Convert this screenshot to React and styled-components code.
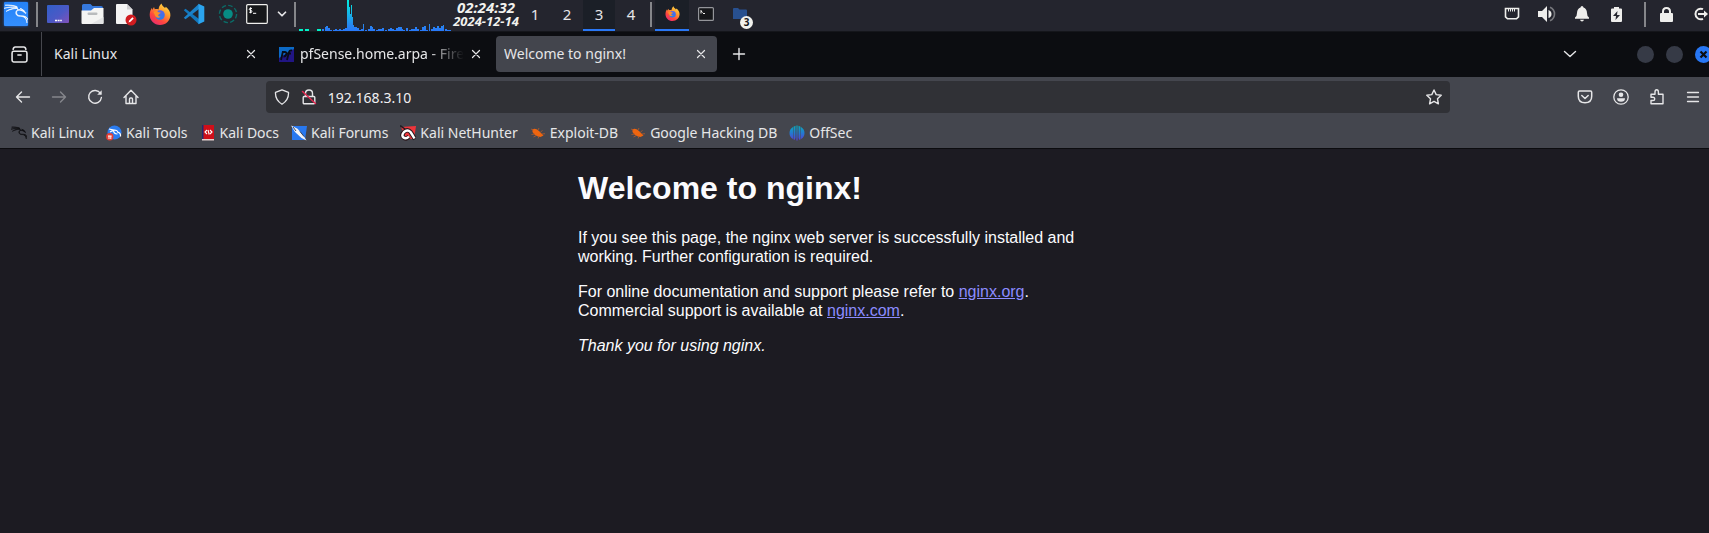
import React from 'react';
import styled, { createGlobalStyle, css } from 'styled-components';
import { SiKalilinux } from 'react-icons/si';

const GlobalStyle = createGlobalStyle`
  * { box-sizing: border-box; }
  html, body { margin: 0; background: #1c1b22; }
  body { font-family: "Noto Sans", "Open Sans", sans-serif; color: #e6e6e8; overflow-x: hidden; }
  button { font: inherit; color: inherit; background: none; border: 0; padding: 0; margin: 0; }
  svg { display: block; flex: none; }
`;

const Desktop = styled.div`
  display: flex;
  flex-direction: column;
  min-height: 100vh;
  overflow-x: clip;
`;

/* ---------- desktop panel ---------- */

const Panel = styled.header`
  display: flex;
  align-items: stretch;
  height: 32px;
  background: #24252e;
  border-bottom: 1px solid #15161b;
`;

const Launchers = styled.nav`
  display: flex;
  align-items: center;
  height: 28px;
`;

const LauncherButton = styled.button`
  display: grid;
  place-items: center;
  width: ${(p) => p.$width || 34}px;
  height: 28px;
`;

const Divider = styled.span`
  flex: none;
  width: 2px;
  height: 25px;
  margin-top: 2px;
  margin-left: ${(p) => p.$before || 0}px;
  margin-right: ${(p) => p.$after || 0}px;
  background: #85868a;
`;

const Clock = styled.time`
  display: flex;
  flex-direction: column;
  align-items: center;
  width: 66px;
  font-weight: 700;
  font-style: italic;
  color: #f2f2ee;
`;

const ClockTime = styled.span`
  font-size: 15px;
  line-height: 14px;
`;

const ClockDate = styled.span`
  font-size: 13px;
  line-height: 14px;
`;

const Workspaces = styled.nav`
  display: flex;
  margin-right: 3px;
`;

const activeItem = css`
  background: #1b1f27;
  border-bottom: 2px solid #2a78f6;
`;

const WorkspaceButton = styled.button`
  width: 32px;
  font-size: 15px;
  line-height: 27px;
  border-bottom: 2px solid transparent;
  ${(p) => p.$active && activeItem}
`;

const TaskButton = styled.button`
  position: relative;
  display: grid;
  place-items: center;
  width: 34px;
  padding-bottom: 2px;
  border-bottom: 2px solid transparent;
  ${(p) => p.$active && activeItem}
`;

const TaskCount = styled.span`
  position: absolute;
  right: 4px;
  bottom: 0;
  width: 13px;
  height: 13px;
  border-radius: 50%;
  background: #f2f2ee;
  color: #16171b;
  font-size: 10px;
  font-weight: 700;
  line-height: 13px;
  text-align: center;
`;

const Tray = styled.div`
  display: flex;
  margin-left: auto;
`;

const TrayButton = styled.button`
  display: grid;
  place-items: center;
  width: 35px;
  height: 28px;
  color: #eeeeec;
`;

const LogoutButton = styled(TrayButton)`
  width: 25px;
  padding-left: 8px;
`;

/* ---------- browser window ---------- */

const TabBar = styled.div`
  display: flex;
  align-items: center;
  height: 45px;
  padding-bottom: 1px;
  background: #0c0d11;
  font-size: 14px;
`;

const ViewButton = styled.button`
  display: grid;
  place-items: center;
  align-self: stretch;
  width: 42px;
  padding-right: 3px;
  border-right: 1px solid #46474d;
`;

const Tabs = styled.div`
  display: flex;
  gap: 4px;
  padding: 0 4px;
`;

const Tab = styled.div`
  display: flex;
  align-items: center;
  width: 221px;
  height: 36px;
  padding-left: 8px;
  border-radius: 4px;
  background: ${(p) => (p.$active ? '#43454d' : 'transparent')};
`;

const TabLabel = styled.button`
  display: flex;
  align-items: center;
  gap: 6px;
  flex: 1;
  min-width: 0;
  overflow: hidden;
  white-space: nowrap;
  text-align: left;
  line-height: 24px;
  ${(p) => p.$fade && css`mask-image: linear-gradient(to right, #000 80%, transparent 100%);`}
`;

const TabClose = styled.button`
  display: grid;
  place-items: center;
  flex: none;
  width: 24px;
  height: 24px;
  margin-right: 4px;
`;

const BarButton = styled.button`
  display: grid;
  place-items: center;
  flex: none;
  width: 36px;
  height: 36px;
  opacity: ${(p) => (p.disabled ? 0.4 : 1)};
`;

const WindowControls = styled.div`
  display: flex;
  align-items: center;
  gap: 12px;
  margin-left: auto;
  margin-right: -3px;
`;

const TabListButton = styled(BarButton)`
  margin-right: 37px;
`;

const WindowButton = styled.button`
  display: grid;
  place-items: center;
  width: 17px;
  height: 17px;
  border-radius: 50%;
  background: ${(p) => (p.$close ? '#2777f5' : '#363a46')};
`;

const Toolbar = styled.div`
  display: flex;
  align-items: center;
  height: 40px;
  padding-left: 5px;
  background: #44464e;
`;

const ToolGroup = styled.div`
  display: flex;
  margin-right: ${(p) => (p.$end ? -2 : 0)}px;
`;

const Spring = styled.span`
  flex: 1;
`;

const AddressBar = styled.div`
  display: flex;
  align-items: center;
  gap: 11px;
  flex: 10;
  min-width: 0;
  height: 32px;
  padding: 0 8px;
  border-radius: 4px;
  background: #303136;
`;

const AddressInput = styled.input`
  flex: 1;
  min-width: 0;
  padding: 0;
  border: 0;
  outline: 0;
  background: none;
  color: #f0f0f2;
  font: 14px "Noto Sans", "Open Sans", sans-serif;
`;

const Bookmarks = styled.nav`
  display: flex;
  gap: 12px;
  height: 31px;
  padding: 0 11px;
  background: #44464e;
`;

const Bookmark = styled.a`
  display: flex;
  align-items: center;
  gap: 4px;
  height: 31px;
  color: inherit;
  font-size: 14px;
  text-decoration: none;
  white-space: nowrap;
`;

/* ---------- page ---------- */

const Page = styled.main`
  flex: 1;
  padding-left: 7px;
  border-top: 1px solid #0c0c0f;
  background: #1c1b22;
  color: #fbfbfe;
  font: 16px/19px "Liberation Sans", Arial, sans-serif;
`;

const Article = styled.article`
  width: 35em;
  margin: 0 auto;
  p { margin: 16px 0; }
  h1 { margin: 21px 0; font-size: 32px; line-height: 37px; }
  a { color: #8c8cff; }
`;

/* ---------- icons ---------- */

const Line = ({ size = 16, children, w = 1.4, ...rest }) => (
  <svg width={size} height={size} viewBox="0 0 16 16" fill="none" stroke="currentColor"
    strokeWidth={w} strokeLinecap="round" strokeLinejoin="round" aria-hidden="true" {...rest}>
    {children}
  </svg>
);

const CloseIcon = () => <Line w={1.2}><path d="M4.5 4.5l7 7m0-7l-7 7" /></Line>;

const KaliIcon = () => (
  <svg width="28" height="28" viewBox="0 0 28 28" aria-hidden="true">
    <defs>
      <linearGradient id="kaliBg" x2="0" y2="1"><stop stopColor="#2482f7" /><stop offset="1" stopColor="#348fff" /></linearGradient>
      <filter id="kaliGlow" x="-30%" y="-30%" width="160%" height="160%"><feGaussianBlur stdDeviation="1.6" /></filter>
    </defs>
    <rect x="2" y="2" width="24" height="24" rx="2" fill="#1c5fc7" filter="url(#kaliGlow)" />
    <rect x="2" y="2" width="24" height="24" rx="1" fill="url(#kaliBg)" />
    <SiKalilinux x="2" y="2" size={24} color="#fff" stroke="#fff" strokeWidth=".6" />
  </svg>
);

const ShowDesktopIcon = () => (
  <svg width="22" height="18" viewBox="0 0 22 18" aria-hidden="true">
    <defs><linearGradient id="desk" y2="1"><stop stopColor="#315fc9" /><stop offset=".55" stopColor="#4b59c6" /><stop offset="1" stopColor="#8151b9" /></linearGradient></defs>
    <rect width="22" height="18" rx="1" fill="url(#desk)" />
    <path d="M8 15.5h2m.6 0h2m.6 0h1.6" stroke="#fff" strokeWidth="1.4" />
  </svg>
);

const FilesIcon = () => (
  <svg width="23" height="22" viewBox="0 0 23 22" aria-hidden="true">
    <path d="M1 2.500q0-1.500 1.500-1.500h7l2 2h8.500q2 0 2 2v5h-21z" fill="#3679dd" />
    <path d="M.5 7.500h9.500l3-2.500h9.500v15q0 1-1 1h-20q-1 0-1-1z" fill="#f4f4f3" />
    <path d="M22.500 14v6q0 1-1 1H10z" fill="#e2e3e4" />
    <rect x="6.500" y="9.500" width="10" height="2.500" rx="1.200" fill="#b9bbbd" />
  </svg>
);

const EditorIcon = () => (
  <svg width="22" height="23" viewBox="0 0 22 23" aria-hidden="true">
    <path d="M1 2q0-1 1-1h10l5.500 5.500V20q0 1-1 1H2q-1 0-1-1z" fill="#f4f4f4" />
    <path d="M12 1v5.500h5.500z" fill="#cfcfd2" />
    <circle cx="16" cy="17" r="5.500" fill="#d11c20" />
    <path d="M13.500 19.500l.7-2 3.200-3.200 1.300 1.300-3.200 3.200z" fill="#fff" />
  </svg>
);

const FirefoxIcon = ({ size = 22 }) => (
  <svg width={size} height={size} viewBox="0 0 22 22" aria-hidden="true">
    <defs>
      <linearGradient id={`fox${size}`} x1=".85" x2=".2" y2="1"><stop stopColor="#ffe64a" /><stop offset=".35" stopColor="#ffa02e" /><stop offset=".7" stopColor="#ff453f" /><stop offset="1" stopColor="#e62b74" /></linearGradient>
      <linearGradient id={`globe${size}`} x2="0" y2="1"><stop stopColor="#5c62e9" /><stop offset="1" stopColor="#287fe8" /></linearGradient>
    </defs>
    <path d="M12.500.5c.3 2 2 3 3.600 4.500l.7-1.200c3.200 2.500 4.700 5.500 4.600 8.400C21.200 17.700 16.800 22 11 22S.8 17.500.7 12c0-3 1-5.600 2.300-7.200L3.300 7 5 4l.8 2.200c1.500-.4 2.700-.2 3.700.2C9.800 4 10.800 1.800 12.500.5z" fill={`url(#fox${size})`} />
    <circle cx="11" cy="12" r="4.800" fill={`url(#globe${size})`} />
    <path d="M4.500 9c2-1.600 4-.9 5 .3l2.200.2c0 1.200-2.200 1.600-2.500 2.500-.2 1 .8 1.800 2.300 1.500-1.200 2-5 1.600-5.700-1.500z" fill="#ff8d27" />
  </svg>
);

const CodeIcon = () => (
  <svg width="22" height="22" viewBox="0 0 22 22" aria-hidden="true">
    <path d="M.8 7.200L2.500 5.700 16 16v5.300z" fill="#1277bd" />
    <path d="M.8 14.800l1.700 1.500L16 6V.7z" fill="#1a82ca" />
    <path d="M15.500.7L21.300 3.400v15.200L15.500 21.300z" fill="#2ba4ee" />
  </svg>
);

const TargetIcon = () => (
  <svg width="20" height="20" viewBox="0 0 20 20" aria-hidden="true">
    <circle cx="10" cy="10" r="4.800" fill="#078c84" />
    <circle cx="10" cy="10" r="8.600" fill="none" stroke="#0b6b67" strokeWidth="1.400" strokeDasharray="4.500 2.250" />
  </svg>
);

const TerminalIcon = () => (
  <svg width="22" height="20" viewBox="0 0 22 20" aria-hidden="true">
    <rect x=".7" y=".7" width="20.600" height="18.600" rx="1" fill="#16171a" stroke="#f0f0ee" strokeWidth="1.200" />
    <path d="M6 4.500Q3.200 3.700 3.200 5.200q0 1 1.500 1.200T6 7.700Q5.700 9 3.200 8.200M4.600 3.300v6M7 9.300h3.200" fill="none" stroke="#fff" />
  </svg>
);

const SmallTerminalIcon = () => (
  <svg width="16" height="14" viewBox="0 0 16 14" aria-hidden="true">
    <rect x=".6" y=".6" width="14.800" height="12.800" rx="1" fill="#16171a" stroke="#94959a" strokeWidth="1.200" />
    <path d="M3 3v3.500M3 4l1.700 1.500M5 6.500h2" fill="none" stroke="#f0f0ee" />
  </svg>
);

const FolderIcon = () => (
  <svg width="14" height="12" viewBox="0 0 14 12" aria-hidden="true">
    <path d="M0 1q0-1 1-1h4l1.500 1.500H13q1 0 1 1V11H0z" fill="#28508f" />
  </svg>
);

const loadBars = [
  [23, 2], [26, 4], [27, 5], [29, 3], [31, 1], [34, 1], [36, 2], [38, 1], [40, 2], [42, 1], [44, 2],
  [46, 3], [48, 31], [49, 31], [50, 24], [51, 17], [52, 26], [53, 14], [54, 6], [55, 4], [56, 4], [58, 3],
  [60, 1], [62, 2], [64, 7], [66, 1], [69, 2], [71, 5], [72, 4], [74, 2], [77, 1], [79, 2], [81, 2], [83, 3],
  [86, 1], [89, 2], [91, 3], [93, 2], [95, 1], [97, 3], [99, 4], [101, 4], [102, 2], [104, 1], [107, 3],
  [110, 1], [112, 2], [114, 2], [116, 4], [118, 2], [121, 1], [123, 4], [125, 5], [127, 1], [130, 7],
  [132, 2], [134, 4], [136, 3], [138, 5], [140, 3], [142, 5], [144, 6], [146, 2], [148, 1], [150, 1],
];

const LoadGraph = () => (
  <svg width="154" height="31" viewBox="0 0 154 31" role="img" aria-label="System load" shapeRendering="crispEdges">
    <defs><linearGradient id="load" gradientUnits="userSpaceOnUse" x2="0" y2="31"><stop stopColor="#00efe0" /><stop offset=".8" stopColor="#2788ee" /><stop offset="1" stopColor="#2878fa" /></linearGradient></defs>
    <path d="M0 30h4m2 0h4m8 0h4" stroke="#00f3c8" strokeWidth="2" />
    {loadBars.map(([x, h]) => <rect key={x} x={x} y={31 - h} width={h > 5 ? 1 : 2} height={h} fill="url(#load)" />)}
  </svg>
);

const PfIcon = () => (
  <svg width="15" height="15" viewBox="0 0 15 15" aria-hidden="true">
    <rect width="15" height="15" fill="#211584" /><path d="M0 0h15v2L0 11z" fill="#0c6ac6" />
    <path d="M2 13l1.800-8h2q2 0 1.500 2.300T4.500 9.500M8 13l2-8q.6-2 3-1.500M8 6.500h4" fill="none" stroke="#080c18" strokeWidth="1.800" />
  </svg>
);

const ToolsIcon = () => (
  <svg width="16" height="16" viewBox="0 0 16 16" aria-hidden="true">
    <circle cx="8.500" cy="7.500" r="7" fill="#2b7cf0" />
    <path d="M3 4l5 1.200M4 7l3.500-1.800q4-.5 4.300 2 3.200.8 2.700 4.300M7.500 5.200q0 3.500 4 3.800" fill="none" stroke="#fff" strokeWidth="1.200" />
    <circle cx="3.800" cy="11.800" r="3.700" fill="#e33f35" /><path d="M2 11h3.600M3 11v3m1.800-3v3" stroke="#fff" />
  </svg>
);
const DocsIcon = () => (
  <svg width="16" height="16" viewBox="0 0 16 16" aria-hidden="true">
    <path d="M2 0h12v15H2z" fill="#cf0f19" /><path d="M2 0h1.500v14H2z" fill="#232b70" /><path d="M2 14h12v1.500H2z" fill="#e5d0cf" />
    <path d="M7 5L5 7l2 2m3-4l2 2-2 2M8 5l1.200 4.500" fill="none" stroke="#fff" strokeWidth="1.100" />
  </svg>
);
const ForumsIcon = () => (
  <svg width="16" height="16" viewBox="0 0 16 16" aria-hidden="true">
    <path d="M1 1h15l-2 14H1z" fill="#2878ef" /><path d="M0 .5l6.500 3.300L12 10l3.500 5.500-5-2.500L4 7z" fill="#f5f5f6" />
    <path d="M2 2l3 4M9 6.500l4 5" stroke="#233149" strokeWidth=".9" />
  </svg>
);
const NetHunterIcon = () => (
  <svg width="16" height="16" viewBox="0 0 16 16" aria-hidden="true">
    <path d="M1 2l15-1-2 13H6z" fill="#f0353b" />
    <path d="M0 .5l5 3.500" stroke="#1d1c21" strokeWidth="1.500" />
    <path d="M9 11.500Q6 15 3.500 12.500T4 7q3.500-3.500 6.500 0 2 3 4.500 7" fill="none" stroke="#2a171b" strokeWidth="4.400" />
    <path d="M9 11.500Q6 14.500 3.500 12.500T4 7q3.500-3 6.500 0 2 3 4 6.500" fill="none" stroke="#fff" strokeWidth="2.400" />
  </svg>
);
const BugIcon = () => (
  <svg width="16" height="16" viewBox="0 0 16 16" aria-hidden="true">
    <path d="M2.500 4.500Q5 2.500 9 6l4.500 4.500-3 1.500Q5 11.500 2.500 7z" fill="#ee650f" />
    <path d="M8 5l1-2M10.500 7l2-1.500M12 9l3-.3M5 9l-3.500.5M6.500 10.500l-3 1.500M9 11.500l-1 2M3.500 5L1 4" stroke="#b55b29" strokeWidth=".8" />
  </svg>
);
const OffSecIcon = () => (
  <svg width="16" height="16" viewBox="0 0 16 16" aria-hidden="true">
    <defs><linearGradient id="offsec" gradientUnits="userSpaceOnUse" x2="0" y2="16"><stop stopColor="#06aeb9" /><stop offset=".5" stopColor="#247ad0" /><stop offset="1" stopColor="#583bd5" /></linearGradient></defs>
    <path d="M4 2v12Q.5 12 .5 8T4 2zM4.500 1.700l2-1V13l-1 2-1-.7zM7.400.5h1.200v15H7.400zM9.500.7l2 1v12.600l-1 .7-1-2zM12 2q3.500 2 3.500 6T12 14z" fill="url(#offsec)" />
  </svg>
);

const bookmarks = [
  ['Kali Linux', <SiKalilinux key="i" size={16} color="#101114" stroke="#101114" strokeWidth=".9" />],
  ['Kali Tools', <ToolsIcon key="i" />],
  ['Kali Docs', <DocsIcon key="i" />],
  ['Kali Forums', <ForumsIcon key="i" />],
  ['Kali NetHunter', <NetHunterIcon key="i" />],
  ['Exploit-DB', <BugIcon key="i" />],
  ['Google Hacking DB', <BugIcon key="i" />],
  ['OffSec', <OffSecIcon key="i" />],
];

const launchers = [
  ['Show desktop', <ShowDesktopIcon key="i" />],
  ['File manager', <FilesIcon key="i" />],
  ['Text editor', <EditorIcon key="i" />],
  ['Firefox', <FirefoxIcon key="i" />],
  ['Code editor', <CodeIcon key="i" />],
  ['Recorder', <TargetIcon key="i" />],
];

function DesktopPanel() {
  return (
    <Panel>
      <Launchers aria-label="Menu">
        <LauncherButton $width={32} aria-label="Applications"><KaliIcon /></LauncherButton>
      </Launchers>
      <Divider $before={4} $after={3} />
      <Launchers aria-label="Applications">
        {launchers.map(([name, icon]) => <LauncherButton key={name} aria-label={name}>{icon}</LauncherButton>)}
        <LauncherButton $width={24} aria-label="Terminal"><TerminalIcon /></LauncherButton>
        <LauncherButton $width={25} aria-label="More terminals"><Line size={14} w={2}><path d="M4 6l4 4 4-4" /></Line></LauncherButton>
      </Launchers>
      <Divider $after={3} />
      <LoadGraph />
      <Clock dateTime="2024-12-14T02:24:32">
        <ClockTime>02:24:32</ClockTime>
        <ClockDate>2024-12-14</ClockDate>
      </Clock>
      <Workspaces aria-label="Workspaces">
        {[1, 2, 3, 4].map((n) => <WorkspaceButton key={n} $active={n === 3}>{n}</WorkspaceButton>)}
      </Workspaces>
      <Divider $after={3} />
      <TaskButton $active aria-label="Firefox window"><FirefoxIcon size={15} /></TaskButton>
      <TaskButton aria-label="Terminal window"><SmallTerminalIcon /></TaskButton>
      <TaskButton aria-label="File windows"><FolderIcon /><TaskCount>3</TaskCount></TaskButton>
      <Tray>
        <TrayButton aria-label="Network">
          <svg width="16" height="16" viewBox="0 0 16 16" fill="none" stroke="currentColor"><path d="M1.500 2.500h13v8.300l-2 2h-9l-2-2z" strokeWidth="1.600" /><path d="M4.500 3v2.500m2-2.500v2.500m2-2.500v2.500m2-2.500v2.500" /></svg>
        </TrayButton>
        <TrayButton aria-label="Volume">
          <svg width="18" height="16" viewBox="0 0 18 16" fill="currentColor"><path d="M0 5h4l5-5v16l-5-5H0zM10.500 4q3 1 3 4t-3 4z" /><path d="M12 1.300q4.500 2 4.500 6.700T12 14.700" fill="none" stroke="#77787d" strokeWidth="1.600" /></svg>
        </TrayButton>
        <TrayButton aria-label="Notifications">
          <svg width="14" height="16" viewBox="0 0 14 16" fill="currentColor"><path d="M7 0q1.300 0 1.500 1.500Q11.800 2.500 12 7q0 3.500 2 4.500v1.300H0v-1.300Q2 10.500 2 7q.2-4.500 3.500-5.500Q5.700 0 7 0zM5 13.800h4Q8.500 15.500 7 15.500T5 13.800z" /></svg>
        </TrayButton>
        <TrayButton aria-label="Power">
          <svg width="11" height="15" viewBox="0 0 11 15"><path d="M3 0h5v1.500h2q1 0 1 1V14q0 1-1 1H1q-1 0-1-1V2.500q0-1 1-1h2z" fill="currentColor" /><path d="M6.500 4L2 9h3l-.5 4L9 8H6z" fill="#24252e" /></svg>
        </TrayButton>
        <Divider $before={10} $after={3} />
        <TrayButton aria-label="Lock screen">
          <svg width="13" height="15" viewBox="0 0 13 15"><rect y="6" width="13" height="9" rx="1" fill="currentColor" /><path d="M3 7V4.500Q3 1 6.500 1T10 4.500V7" fill="none" stroke="currentColor" strokeWidth="2" /></svg>
        </TrayButton>
        <LogoutButton aria-label="Log out">
          <svg width="15" height="14" viewBox="0 0 15 14" fill="none" stroke="currentColor" strokeWidth="2"><path d="M10 2.200A5.300 5.300 0 1 0 10 11.800M5 7h7" /><path d="M11 3.500L15 7l-4 3.500z" fill="currentColor" stroke="none" /></svg>
        </LogoutButton>
      </Tray>
    </Panel>
  );
}

function BrowserTabs() {
  return (
    <TabBar>
      <ViewButton aria-label="Firefox View">
        <Line w={1.500} size={17}><rect x="1" y="5" width="14" height="10" rx="1.500" /><path d="M2 3.200Q2.300 1 4 1h8q1.700 0 2 2.200M6.500 8.500h3" /></Line>
      </ViewButton>
      <Tabs>
        <Tab><TabLabel>Kali Linux</TabLabel><TabClose aria-label="Close Kali Linux"><CloseIcon /></TabClose></Tab>
        <Tab><TabLabel $fade><PfIcon />pfSense.home.arpa - Firewall</TabLabel><TabClose aria-label="Close pfSense"><CloseIcon /></TabClose></Tab>
        <Tab $active><TabLabel>Welcome to nginx!</TabLabel><TabClose aria-label="Close Welcome to nginx"><CloseIcon /></TabClose></Tab>
      </Tabs>
      <BarButton aria-label="New tab"><Line><path d="M8 2.500v11M2.500 8h11" /></Line></BarButton>
      <WindowControls>
        <TabListButton aria-label="List all tabs"><Line><path d="M2.500 5.500L8 10.500l5.500-5" /></Line></TabListButton>
        <WindowButton aria-label="Minimize" />
        <WindowButton aria-label="Maximize" />
        <WindowButton $close aria-label="Close window">
          <svg width="9" height="9" viewBox="0 0 9 9"><path d="M1.500 1.500l6 6m0-6l-6 6" stroke="#0c0d11" strokeWidth="2.200" /></svg>
        </WindowButton>
      </WindowControls>
    </TabBar>
  );
}

function BrowserToolbar() {
  return (
    <Toolbar>
      <ToolGroup>
        <BarButton aria-label="Back"><Line><path d="M14.500 8h-13M6.500 3l-5 5 5 5" /></Line></BarButton>
        <BarButton disabled aria-label="Forward"><Line><path d="M1.500 8h13M9.500 3l5 5-5 5" /></Line></BarButton>
        <BarButton aria-label="Reload"><Line><path d="M13.500 4.500A6.400 6.400 0 1 0 14.400 8.500" /><path d="M14.700 1.200v4.500h-4.500z" fill="currentColor" stroke="none" /></Line></BarButton>
        <BarButton aria-label="Home"><Line><path d="M1 8.500l7-7.300 7 7.300M3 7v7.500h10V7M6.500 14V10q0-1 1-1h1q1 0 1 1v4" /></Line></BarButton>
      </ToolGroup>
      <Spring />
      <AddressBar>
        <Line w={1.300}><path d="M8 .8l6.500 2.500Q15 11 8 15.300 1 11 1.500 3.300z" /></Line>
        <Line w={1.400}><rect x="2.200" y="7.500" width="11.600" height="7.300" rx="1" /><path d="M4.500 7V4.500Q4.500 1 8 1t3.500 3.500V7" /><path d="M1.500 2.500l13 12" stroke="#e22850" strokeWidth="1.500" /></Line>
        <AddressInput aria-label="Address" defaultValue="192.168.3.10" />
        <Line><path d="M8 1l2.200 4.600 5 .7-3.700 3.500.9 5L8 12.400l-4.400 2.400.9-5L.8 6.300l5-.7z" /></Line>
      </AddressBar>
      <Spring />
      <ToolGroup $end>
        <BarButton aria-label="Save to Pocket"><Line w={1.500}><path d="M2.500 2h11q1.200 0 1.200 1.200v4Q14.700 13.700 8 13.700T1.300 7.200v-4Q1.300 2 2.500 2zM4.800 6.500L8 9.500l3.200-3" /></Line></BarButton>
        <BarButton aria-label="Account"><Line w={1.300}><circle cx="8" cy="8" r="7.200" /><circle cx="8" cy="5.700" r="2.300" fill="currentColor" stroke="none" /><path d="M4 9.200h8q0 3.500-4 3.500T4 9.200z" fill="currentColor" stroke="none" /></Line></BarButton>
        <BarButton aria-label="Extensions"><Line w={1.400}><path d="M2 5.200h4V3q0-2.200 1.700-2.200T9.400 3v2.200H14v9.600H2v-3.300h2q1.700 0 1.700-1.600T4 8.300H2z" /></Line></BarButton>
        <BarButton aria-label="Menu"><Line w={1.300}><path d="M2.500 3.500h11m-11 4.500h11m-11 4.500h11" /></Line></BarButton>
      </ToolGroup>
    </Toolbar>
  );
}

export default function App() {
  return (
    <Desktop>
      <GlobalStyle />
      <DesktopPanel />
      <BrowserTabs />
      <BrowserToolbar />
      <Bookmarks aria-label="Bookmarks">
        {bookmarks.map(([name, icon]) => <Bookmark key={name} href="#">{icon}<span>{name}</span></Bookmark>)}
      </Bookmarks>
      <Page>
        <Article>
          <h1>Welcome to nginx!</h1>
          <p>If you see this page, the nginx web server is successfully installed and working. Further configuration is required.</p>
          <p>
            For online documentation and support please refer to <a href="#org">nginx.org</a>.<br />
            Commercial support is available at <a href="#com">nginx.com</a>.
          </p>
          <p><em>Thank you for using nginx.</em></p>
        </Article>
      </Page>
    </Desktop>
  );
}
